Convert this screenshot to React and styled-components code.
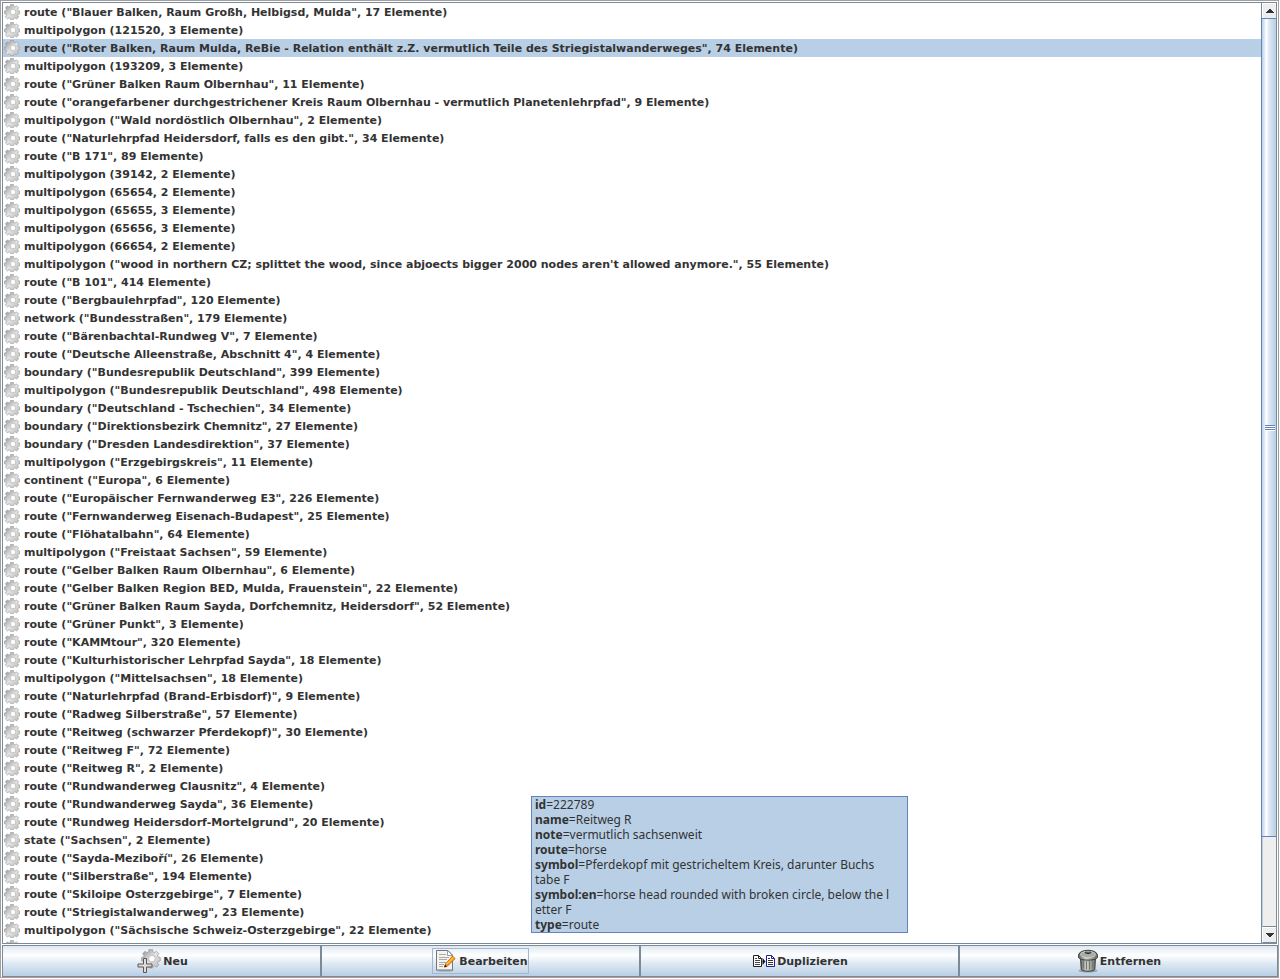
import React, { useState } from "react";
import styled, { createGlobalStyle } from "styled-components";

const relations = [
  'route ("Blauer Balken, Raum Großh, Helbigsd, Mulda", 17 Elemente)',
  'multipolygon (121520, 3 Elemente)',
  'route ("Roter Balken, Raum Mulda, ReBie - Relation enthält z.Z. vermutlich Teile des Striegistalwanderweges", 74 Elemente)',
  'multipolygon (193209, 3 Elemente)',
  'route ("Grüner Balken Raum Olbernhau", 11 Elemente)',
  'route ("orangefarbener durchgestrichener Kreis Raum Olbernhau - vermutlich Planetenlehrpfad", 9 Elemente)',
  'multipolygon ("Wald nordöstlich Olbernhau", 2 Elemente)',
  'route ("Naturlehrpfad Heidersdorf, falls es den gibt.", 34 Elemente)',
  'route ("B 171", 89 Elemente)',
  'multipolygon (39142, 2 Elemente)',
  'multipolygon (65654, 2 Elemente)',
  'multipolygon (65655, 3 Elemente)',
  'multipolygon (65656, 3 Elemente)',
  'multipolygon (66654, 2 Elemente)',
  'multipolygon ("wood in northern CZ; splittet the wood, since abjoects bigger 2000 nodes aren\'t allowed anymore.", 55 Elemente)',
  'route ("B 101", 414 Elemente)',
  'route ("Bergbaulehrpfad", 120 Elemente)',
  'network ("Bundesstraßen", 179 Elemente)',
  'route ("Bärenbachtal-Rundweg V", 7 Elemente)',
  'route ("Deutsche Alleenstraße, Abschnitt 4", 4 Elemente)',
  'boundary ("Bundesrepublik Deutschland", 399 Elemente)',
  'multipolygon ("Bundesrepublik Deutschland", 498 Elemente)',
  'boundary ("Deutschland - Tschechien", 34 Elemente)',
  'boundary ("Direktionsbezirk Chemnitz", 27 Elemente)',
  'boundary ("Dresden Landesdirektion", 37 Elemente)',
  'multipolygon ("Erzgebirgskreis", 11 Elemente)',
  'continent ("Europa", 6 Elemente)',
  'route ("Europäischer Fernwanderweg E3", 226 Elemente)',
  'route ("Fernwanderweg Eisenach-Budapest", 25 Elemente)',
  'route ("Flöhatalbahn", 64 Elemente)',
  'multipolygon ("Freistaat Sachsen", 59 Elemente)',
  'route ("Gelber Balken Raum Olbernhau", 6 Elemente)',
  'route ("Gelber Balken Region BED, Mulda, Frauenstein", 22 Elemente)',
  'route ("Grüner Balken Raum Sayda, Dorfchemnitz, Heidersdorf", 52 Elemente)',
  'route ("Grüner Punkt", 3 Elemente)',
  'route ("KAMMtour", 320 Elemente)',
  'route ("Kulturhistorischer Lehrpfad Sayda", 18 Elemente)',
  'multipolygon ("Mittelsachsen", 18 Elemente)',
  'route ("Naturlehrpfad (Brand-Erbisdorf)", 9 Elemente)',
  'route ("Radweg Silberstraße", 57 Elemente)',
  'route ("Reitweg (schwarzer Pferdekopf)", 30 Elemente)',
  'route ("Reitweg F", 72 Elemente)',
  'route ("Reitweg R", 2 Elemente)',
  'route ("Rundwanderweg Clausnitz", 4 Elemente)',
  'route ("Rundwanderweg Sayda", 36 Elemente)',
  'route ("Rundweg Heidersdorf-Mortelgrund", 20 Elemente)',
  'state ("Sachsen", 2 Elemente)',
  'route ("Sayda-Meziboří", 26 Elemente)',
  'route ("Silberstraße", 194 Elemente)',
  'route ("Skiloipe Osterzgebirge", 7 Elemente)',
  'route ("Striegistalwanderweg", 23 Elemente)',
  'multipolygon ("Sächsische Schweiz-Osterzgebirge", 22 Elemente)',
  '',
];

const tags = [
  ["id", ["222789"]],
  ["name", ["Reitweg R"]],
  ["note", ["vermutlich sachsenweit"]],
  ["route", ["horse"]],
  ["symbol", ["Pferdekopf mit gestricheltem Kreis, darunter Buchs", "tabe F"]],
  ["symbol:en", ["horse head rounded with broken circle, below the l", "etter F"]],
  ["type", ["route"]],
];

const GearShape = () => (
  <>
    <path
      d="M6.500 0.500h3l.4 2 1.100.5 1.700-1.100 1.900 1.900-1.100 1.700.5 1.100 1.800.4v2.800l-1.800.4-.5 1.100 1.100 1.700-1.900 1.900-1.700-1.100-1.100.5-.4 1.300H6.500l-.4-1.300-1.100-.5-1.700 1.100-1.900-1.900 1.100-1.700-.5-1.100-1.500-.4V7l1.500-.4.5-1.100-1.100-1.700 1.900-1.900L5 3l1.100-.5z"
      fill="url(#gearFill)"
      stroke="#999"
      strokeWidth="0.6"
    />
    <circle cx="8.800" cy="8" r="3.600" fill="#cfcfcf" />
    <circle cx="9" cy="8" r="2.700" fill="#fff" stroke="#b4b4b4" strokeWidth="0.6" />
  </>
);

const GearIcon = () => (
  <svg width="16" height="16" viewBox="0 0 16 16" aria-hidden="true">
    <GearShape />
  </svg>
);

const NewIcon = () => (
  <svg width="24" height="24" viewBox="0 0 24 24" aria-hidden="true">
    <g transform="translate(4 0) scale(1.22)">
      <GearShape />
    </g>
    <path d="M6.500 9.500h3v5.500h5.500v3h-5.500v5.500h-3v-5.500h-5.500v-3h5.500z" fill="#ddd" stroke="#5b5450" />
  </svg>
);

const EditIcon = () => (
  <svg width="22" height="22" viewBox="0 0 22 22" aria-hidden="true">
    <ellipse cx="10" cy="20.6" rx="9" ry="1.2" fill="#8d98a3" opacity="0.6" />
    <path d="M1.500 0.500h11.500l4.500 4.500v15h-16z" fill="#f3f3f1" stroke="#777" />
    <path d="M12.500.5v5h5z" fill="#fff" stroke="#888" strokeWidth="0.8" />
    <path d="M4 4.5h7M4 7.5h10M4 9.5h8M4 12.5h7M4 14.5h5M4 16.5h4" stroke="#aaa" />
    <path d="M17.5 6l2.7 2.6-7.6 7.3-3 1.1.9-3.1z" fill="#f8a018" stroke="#c35a00" strokeWidth="0.8" />
    <path d="M18.2 7.5l-6.4 6.4" stroke="#ffd45c" />
    <path d="M10 14.6l-.8 2.8 2.8-1z" fill="#222" />
  </svg>
);

const CopyIcon = () => (
  <svg width="22" height="12" viewBox="0 0 22 12" aria-hidden="true">
    <path d="M.5.5h5l3 3v8h-8z" fill="#fff" stroke="#222" />
    <path d="M5.5.5v3h3" fill="none" stroke="#222" />
    <path d="M2 3.5h2M2 5.5h5M2 7.5h5M2 9.5h5" stroke="#444" />
    <path d="M9.5 3v7l3-3.5z" fill="#111" />
    <path d="M13.5.5h5l3 3v8h-8z" fill="#fff" stroke="#1c1c9c" />
    <path d="M18.5.5v3h3" fill="none" stroke="#1c1c9c" />
    <path d="M15 3.5h2M15 5.5h5M15 7.5h5M15 9.5h5" stroke="#333" />
  </svg>
);

const TrashIcon = () => (
  <svg width="20" height="24" viewBox="0 0 20 24" aria-hidden="true">
    <ellipse cx="10" cy="21.8" rx="9.5" ry="1.8" fill="#7f8a94" opacity="0.7" />
    <path d="M2.5 8h15l-.7 12.2c-1 2.7-12.600 2.700-13.600 0z" fill="url(#canFill)" stroke="#3c3e3b" />
    <path d="M5.500 11v8.500M8.500 12v8.500M11.500 12v8.500M14.500 11v8.500" stroke="#777973" />
    <path d="M.5 6.500c0-7 19-7 19 0v2c-1 3.500-18 3.500-19 0z" fill="url(#canFill)" stroke="#3c3e3b" />
    <ellipse cx="10" cy="5.500" rx="7.500" ry="3" fill="#a9aba6" stroke="#d3d5d0" strokeWidth="0.8" />
    <path d="M6.500 3.500c1-2 6-2 7 0l-2 1.500h-3z" fill="#333" />
    <path d="M8 2.800h4" stroke="#ccc" />
  </svg>
);

const actions = [
  { label: "Neu", icon: NewIcon },
  { label: "Bearbeiten", icon: EditIcon, focused: true },
  { label: "Duplizieren", icon: CopyIcon },
  { label: "Entfernen", icon: TrashIcon },
];

const App = () => {
  const [selected, setSelected] = useState(2);

  return (
    <>
      <GlobalStyle />
      <Defs aria-hidden="true">
        <defs>
          <linearGradient id="gearFill" x1="0" y1="0" x2="1" y2="1">
            <stop offset="0" stopColor="#8c8c8c" />
            <stop offset="0.5" stopColor="#e4e4e4" />
            <stop offset="1" stopColor="#b8b8b8" />
          </linearGradient>
          <linearGradient id="canFill">
            <stop offset="0" stopColor="#62645f" />
            <stop offset="0.4" stopColor="#d0d2cd" />
            <stop offset="1" stopColor="#6a6c67" />
          </linearGradient>
        </defs>
      </Defs>
      <Dialog>
        <ListPane>
          <List role="listbox" aria-label="Relationen">
            {relations.map((text, i) => (
              <Row
                key={i}
                role="option"
                aria-selected={i === selected}
                $selected={i === selected}
                onClick={() => setSelected(i)}
              >
                <GearIcon />
                <RowText>{text}</RowText>
              </Row>
            ))}
          </List>
          <Scrollbar>
            <ArrowButton type="button" aria-label="Nach oben">
              <svg width="8" height="4" viewBox="0 0 8 4">
                <path d="M0 4V3h1V2h1V1h1V0h2v1h1v1h1v1h1v1z" fill="#333" />
              </svg>
            </ArrowButton>
            <Track>
              <Thumb>
                <Grip />
              </Thumb>
            </Track>
            <ArrowButton type="button" aria-label="Nach unten" $down>
              <svg width="8" height="4" viewBox="0 0 8 4">
                <path d="M0 0v1h1v1h1v1h1v1h2V3h1V2h1V1h1V0z" fill="#333" />
              </svg>
            </ArrowButton>
          </Scrollbar>
        </ListPane>
        <ButtonBar>
          {actions.map(({ label, icon: Icon, focused }) => (
            <ActionButton key={label} type="button">
              <ButtonContent $focused={focused}>
                <Icon />
                {label}
              </ButtonContent>
            </ActionButton>
          ))}
        </ButtonBar>
        <Tooltip role="tooltip">
          {tags.map(([key, lines]) => (
            <React.Fragment key={key}>
              <TagLine>
                <b>{key}</b>={lines[0]}
              </TagLine>
              {lines[1] && <TagLine>{lines[1]}</TagLine>}
            </React.Fragment>
          ))}
        </Tooltip>
      </Dialog>
    </>
  );
};

const GlobalStyle = createGlobalStyle`
  *, *::before, *::after {
    box-sizing: border-box;
  }
  body {
    margin: 0;
    background: #fff;
    color: #333;
    font-family: "DejaVu Sans", sans-serif;
    font-size: 11px;
  }
  svg {
    display: block;
    flex: none;
  }
`;

const Defs = styled.svg`
  position: absolute;
  width: 0;
  height: 0;
`;

const Dialog = styled.div`
  position: relative;
  display: flex;
  flex-direction: column;
  gap: 1px;
  height: calc(100vh - 1px);
  margin-right: 1px;
  padding: 1px 0 0 1px;
  border: 1px solid #a0a0a0;
  overflow: hidden;
`;

const ListPane = styled.div`
  flex: 1;
  min-height: 0;
  display: flex;
  margin-right: 1px;
  border: 1px solid #7a8a99;
`;

const List = styled.ul`
  flex: 1;
  margin: 0;
  padding: 0;
  list-style: none;
  overflow: hidden;
`;

const Row = styled.li`
  display: flex;
  align-items: center;
  gap: 4px;
  height: 18px;
  padding-left: 1px;
  font-weight: bold;
  white-space: nowrap;
  background: ${(props) => (props.$selected ? "#b8cfe5" : "#fff")};
`;

const RowText = styled.span`
  padding-top: 2px;
  line-height: 16px;
`;

const Scrollbar = styled.div`
  display: flex;
  flex-direction: column;
  width: 15px;
  border-left: 1px solid #7a8a99;
  background: #eee;
`;

const ArrowButton = styled.button`
  display: flex;
  align-items: center;
  justify-content: center;
  height: ${(props) => (props.$down ? "16px" : "15px")};
  padding: 0;
  border: 1px solid #fff;
  border-width: 1px 0 0 1px;
  border-bottom: ${(props) => (props.$down ? "1px solid #7a8a99" : "0")};
  background: #eee;
`;

const Track = styled.div`
  flex: 1;
  border-left: 1px solid #b8cfe5;
  border-bottom: 1px solid #7a8a99;
`;

const Thumb = styled.div`
  display: flex;
  align-items: center;
  justify-content: center;
  height: calc(90% + 2px);
  margin-left: -2px;
  border: 1px solid #6382bf;
  border-right: 0;
  background: linear-gradient(to right, #b8cfe5, #dde8f3 15%, #fff 32%, #dde8f3 50%, #b8cfe5);
`;

const Grip = styled.div`
  width: 10px;
  height: 6px;
  margin-left: 2px;
  background: repeating-linear-gradient(#6382bf 0 1px, #fff 1px 2px);
`;

const ButtonBar = styled.div`
  display: grid;
  grid-template-columns: repeat(4, 1fr);
`;

const ActionButton = styled.button`
  display: flex;
  align-items: center;
  justify-content: center;
  height: 32px;
  padding: 0;
  border: 1px solid #7a8a99;
  color: #333;
  font: bold 11px "DejaVu Sans", sans-serif;
  background: linear-gradient(#dde8f3, #fff 30%, #dde8f3 60%, #b8cfe5);
`;

const ButtonContent = styled.span`
  display: flex;
  align-items: center;
  gap: 2px;
  height: 26px;
  padding-left: 2px;
  border: 1px solid ${(props) => (props.$focused ? "#a3b8cc" : "transparent")};
`;

const Tooltip = styled.div`
  position: absolute;
  left: 530px;
  top: 795px;
  width: 377px;
  padding-left: 3px;
  border: 1px solid #6382bf;
  background: #b8cfe5;
  font-family: "Noto Sans", sans-serif;
  font-size: 12px;
`;

const TagLine = styled.div`
  height: 15px;
  line-height: 15px;
  white-space: nowrap;
`;

export default App;
